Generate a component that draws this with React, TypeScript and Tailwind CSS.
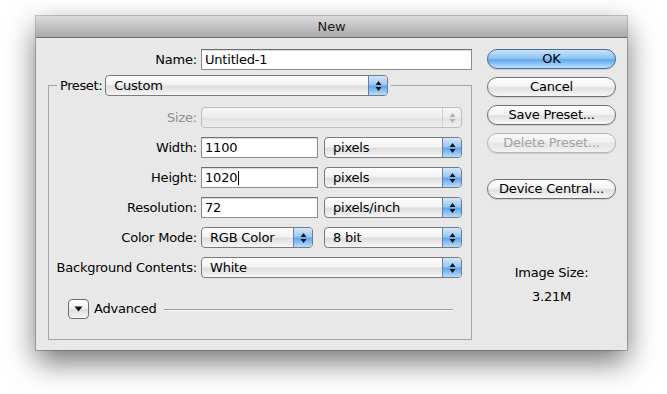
import React from "react";

function Arrows({ disabled }: { disabled?: boolean }) {
  return (
    <svg width="7" height="12" viewBox="0 0 7 12">
      <path d="M3.5 1 L6.5 5 L0.5 5 Z M0.5 7 L6.5 7 L3.5 11 Z" fill={disabled ? "#b4b4b4" : "#141414"} />
    </svg>
  );
}

function Popup({ label, w, disabled }: { label: string; w: string; disabled?: boolean }) {
  return (
    <div
      className={`${w} flex h-[21px] items-stretch overflow-hidden rounded-[4px] border ${
        disabled ? "border-[#bdbdbd] bg-[linear-gradient(#f6f6f6,#ececec_50%,#e2e2e2_52%,#eeeeee)]" : "border-[#7a7a7a] bg-[linear-gradient(#ffffff,#f3f3f3_45%,#dedede_55%,#f6f6f6)]"
      }`}
    >
      <span className="flex-1 pl-[8px] text-[13px] leading-[19px] text-black">{label}</span>
      <span
        className={`flex w-[19px] items-center justify-center border-l ${
          disabled ? "border-[#d0d0d0]" : "border-[#5f82b3] bg-[linear-gradient(#d2e7fc,#9ac8f3_45%,#62a6ec_55%,#b9ddfb)]"
        }`}
      >
        <Arrows disabled={disabled} />
      </span>
    </div>
  );
}

function Input({ value, w, cursor }: { value: string; w: string; cursor?: boolean }) {
  return (
    <div className={`${w} flex h-[21px] items-center border border-[#8c8c8c] border-t-[#6e6e6e] bg-white pl-[3px] text-[13px] text-black shadow-[inset_0_1px_1px_rgba(0,0,0,0.15)]`}>
      <span>{value}</span>
      {cursor && <span className="ml-[1px] h-[14px] w-[1px] bg-black" />}
    </div>
  );
}

function Button({ label, primary, disabled }: { label: string; primary?: boolean; disabled?: boolean }) {
  const cls = primary
    ? "border-[#4a6a9a] bg-[linear-gradient(#c9e3fb,#91c5f3_45%,#5fa8ee_55%,#bfe2ff)] text-black"
    : disabled
    ? "border-[#b8b8b8] bg-[linear-gradient(#fafafa,#f0f0f0_45%,#e4e4e4_55%,#f2f2f2)] text-[#a3a3a3]"
    : "border-[#707070] bg-[linear-gradient(#ffffff,#f4f4f4_45%,#e0e0e0_55%,#f7f7f7)] text-black";
  return (
    <div className={`flex h-[20px] w-full items-center justify-center rounded-full border text-[13px] ${cls} shadow-[0_1px_1px_rgba(0,0,0,0.12)]`}>
      {label}
    </div>
  );
}

function Row({ label, children, disabled }: { label: string; children: React.ReactNode; disabled?: boolean }) {
  return (
    <div className="flex h-[21px] items-center gap-[4px]">
      <div className={`w-[148px] text-right text-[13px] ${disabled ? "text-[#8d8d8d]" : "text-black"}`}>{label}</div>
      {children}
    </div>
  );
}

export default function App() {
  return (
    <div className="h-[394px] w-[667px] bg-white pl-[36px] pt-[16px] font-['DejaVu_Sans',sans-serif] tracking-[-0.2px]">
      <div className="flex h-[334px] w-[591px] flex-col shadow-[0_0_0_1px_rgba(0,0,0,0.22),0_12px_28px_rgba(0,0,0,0.55)]">
        <div className="flex h-[22px] items-center justify-center border-b border-[#6f6f6f] bg-[linear-gradient(#dcdcdc,#a9a9a9)] text-[13px] text-[#1c1c1c]">
          New
        </div>
        <div className="flex flex-1 bg-[#e8e8e8] pl-[12px] pr-[11px] pt-[11px]">
          <div className="flex w-[424px] flex-col">
            <div className="flex h-[21px] items-center gap-[4px]">
              <div className="w-[149px] text-right text-[13px] text-black">Name:</div>
              <Input value="Untitled-1" w="w-[271px]" />
            </div>
            <fieldset className="mt-[5px] w-[424px] border border-[#a5a5a5] pb-[20px] pt-[11px]">
              <legend className="ml-[8px] px-[3px]">
                <div className="flex items-center gap-[3px]">
                  <span className="text-[13px] tracking-[-0.4px] text-black">Preset:</span>
                  <Popup label="Custom" w="w-[283px]" />
                </div>
              </legend>
              <div className="flex flex-col gap-[9px]">
                <Row label="Size:" disabled>
                  <Popup label="" w="w-[261px]" disabled />
                </Row>
                <Row label="Width:">
                  <Input value="1100" w="w-[117px]" />
                  <Popup label="pixels" w="ml-[2px] w-[138px]" />
                </Row>
                <Row label="Height:">
                  <Input value="1020" w="w-[117px]" cursor />
                  <Popup label="pixels" w="ml-[2px] w-[138px]" />
                </Row>
                <Row label="Resolution:">
                  <Input value="72" w="w-[117px]" />
                  <Popup label="pixels/inch" w="ml-[2px] w-[138px]" />
                </Row>
                <Row label="Color Mode:">
                  <Popup label="RGB Color" w="w-[112px]" />
                  <Popup label="8 bit" w="ml-[7px] w-[138px]" />
                </Row>
                <Row label="Background Contents:">
                  <Popup label="White" w="w-[261px]" />
                </Row>
              </div>
              <div className="mt-[21px] flex h-[20px] items-center pl-[19px] pr-[18px]">
                <div className="flex h-[20px] w-[21px] items-center justify-center rounded-[4px] border border-[#6e6e6e] bg-[linear-gradient(#ffffff,#f0f0f0_50%,#dedede_52%,#f4f4f4)]">
                  <svg width="9" height="6" viewBox="0 0 9 6">
                    <path d="M0.5 0.5 L8.5 0.5 L4.5 5.5 Z" fill="#111" />
                  </svg>
                </div>
                <span className="ml-[5px] text-[13px] text-black">Advanced</span>
                <div className="ml-[7px] h-[1px] flex-1 bg-[#9e9e9e] shadow-[0_1px_0_#fafafa]" />
              </div>
            </fieldset>
          </div>
          <div className="ml-[15px] flex w-[129px] flex-col">
            <div className="flex flex-col gap-[8px]">
              <Button label="OK" primary />
              <Button label="Cancel" />
              <Button label="Save Preset..." />
              <Button label="Delete Preset..." disabled />
            </div>
            <div className="mt-[26px]">
              <Button label="Device Central..." />
            </div>
            <div className="mt-[66px] text-center text-[13px] leading-[16px] text-black">Image Size:</div>
            <div className="mt-[8px] text-center text-[13px] leading-[16px] text-black">3.21M</div>
          </div>
        </div>
      </div>
    </div>
  );
}
